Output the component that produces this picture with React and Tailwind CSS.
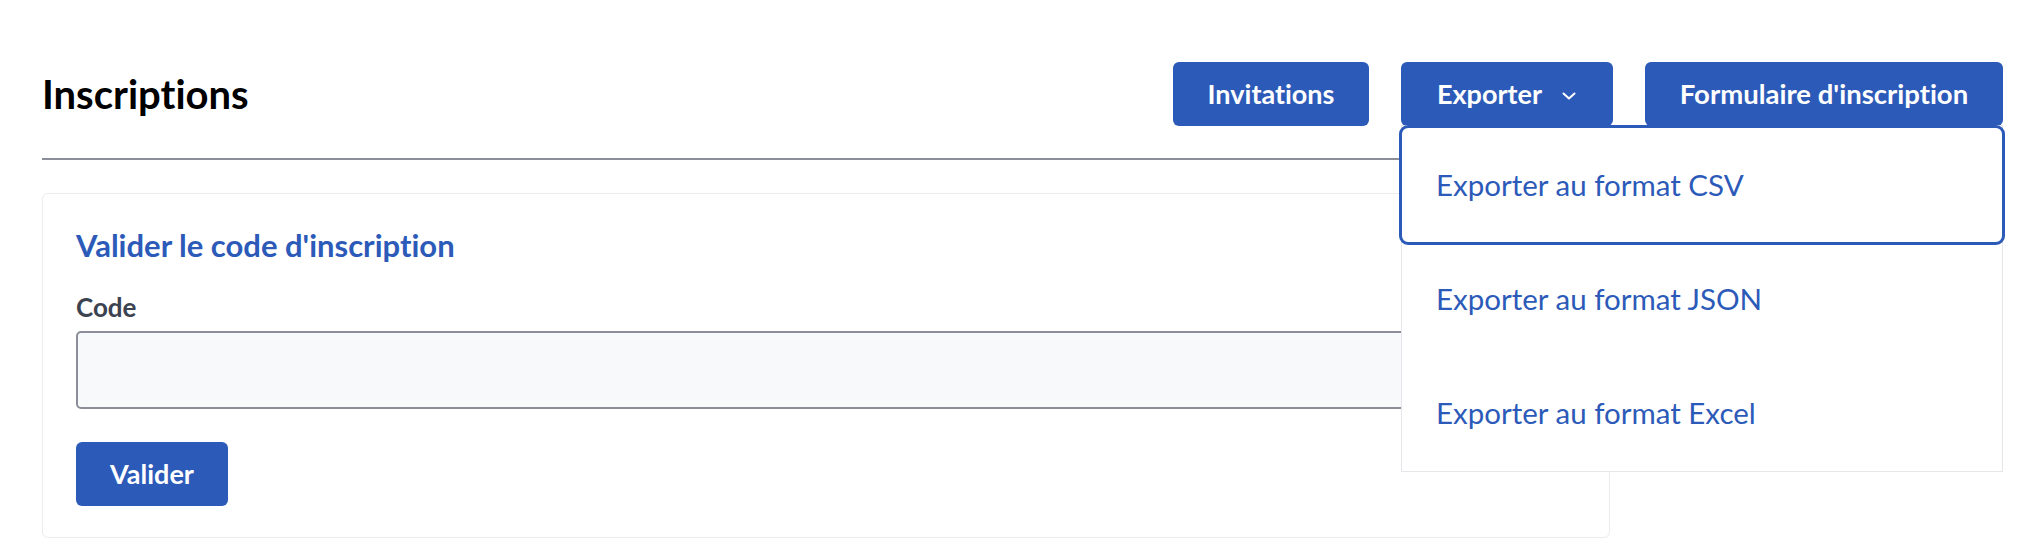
import { useState } from 'react'

const exportFormats = ['CSV', 'JSON', 'Excel']

function Chevron() {
  return (
    <svg width="14" height="8" viewBox="0 0 14 8" fill="none" className="mt-[4px]">
      <path d="M1.5 1.5 7 6.5l5.5-5" stroke="currentColor" strokeWidth="2" strokeLinecap="round" strokeLinejoin="round" />
    </svg>
  )
}

export default function App() {
  const [code, setCode] = useState('')
  const [open] = useState(true)

  return (
    <div
      className="relative h-[546px] w-full overflow-hidden bg-white pt-[62px] pl-[42px] pr-[33px] [font-variant-ligatures:none]"
      style={{ fontFamily: 'Lato, "Noto Sans", sans-serif' }}
    >
      {/* Header */}
      <div className="flex h-[64px] items-center justify-between">
        <h1 className="text-[40px] leading-[64px] font-bold text-black">Inscriptions</h1>
        <div className="flex gap-[32px]">
          <button className="h-[64px] w-[196px] rounded-[6px] bg-[#2c5ab9] text-[27px] leading-[64px] font-bold text-white">
            Invitations
          </button>
          <div className="relative">
            <button className="flex h-[64px] w-[212px] items-center gap-[20px] rounded-[6px] bg-[#2c5ab9] pl-[36px] text-[27px] font-bold text-white">
              <span>Exporter</span>
              <Chevron />
            </button>
            {open && (
              <div className="absolute left-0 top-[63px] z-10 w-[602px] border border-[#e6e6eb] bg-white pt-[2px] pb-[1px]">
                {exportFormats.map((f, i) => (
                  <div
                    key={f}
                    className={
                      'flex h-[114px] items-center pl-[34px] text-[29.5px] text-[#2c5ab9] ' +
                      (i === 0 ? 'rounded-[6px] outline-[3px] outline-[#2c5ab9]' : '')
                    }
                    style={i === 0 ? { outlineStyle: 'solid' } : undefined}
                  >
                    Exporter au format {f}
                  </div>
                ))}
              </div>
            )}
          </div>
          <button className="h-[64px] w-[358px] rounded-[6px] bg-[#2c5ab9] text-[27.5px] leading-[64px] font-bold text-white">
            Formulaire d'inscription
          </button>
        </div>
      </div>

      <div className="mt-[32px] h-[2px] bg-[#8b8e99]" />

      {/* Card */}
      <div className="mt-[33px] w-[1568px] rounded-[6px] border border-[#ebebf0] px-[33px] pt-[31px] pb-[31px]">
        <h2 className="text-[31px] leading-[40px] font-bold text-[#2c5ab9]">Valider le code d'inscription</h2>
        <label htmlFor="code" className="mt-[26px] block text-[26px] leading-[32px] font-bold text-[#3b4250]">
          Code
        </label>
        <input
          id="code"
          value={code}
          onChange={(e) => setCode(e.target.value)}
          className="mt-[8px] block h-[78px] w-full rounded-[5px] border-2 border-[#8b8e99] bg-[#f8f9fb] px-4 text-[26px] outline-none"
        />
        <button className="mt-[33px] h-[64px] w-[152px] rounded-[6px] bg-[#2c5ab9] text-[27px] font-bold text-white">
          Valider
        </button>
      </div>
    </div>
  )
}
